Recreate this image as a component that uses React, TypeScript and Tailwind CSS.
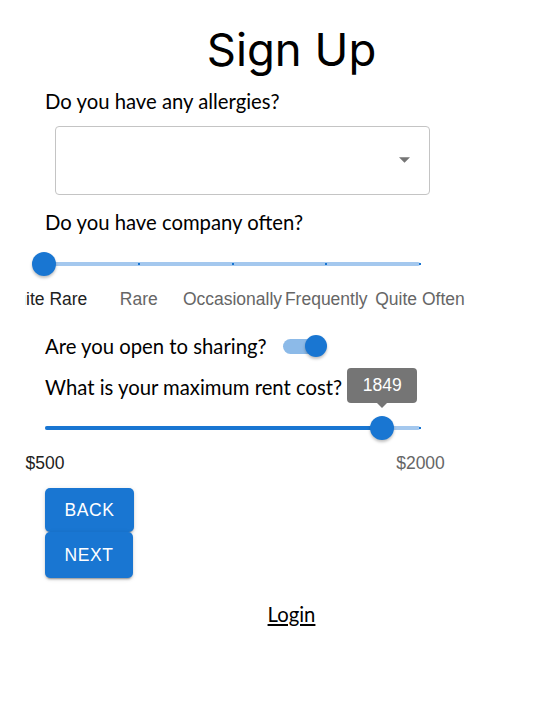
import React from "react";

const blue = "bg-[#1976d2]";

const companyMarks = [
    { label: "Quite Rare", pos: 0 },
    { label: "Rare", pos: 93.75 },
    { label: "Occasionally", pos: 187.5 },
    { label: "Frequently", pos: 281.25 },
    { label: "Quite Often", pos: 375 },
];

export default function App() {
    const rent = 1849;
    const rentPos = ((rent - 500) / 1500) * 375;

    return (
        <div className="min-h-screen w-full bg-white text-black font-['Lato','Noto_Sans',sans-serif]">
            {/* Title */}
            <div className="pl-[48px] pt-[22px] text-center">
                <h1 className="text-[45.5px] leading-[56px] font-normal font-['Inter',sans-serif]">Sign Up</h1>
            </div>

            <div className="pl-[25px] flex flex-col">
                {/* Allergies */}
                <p className="ml-[20px] mt-[11px] text-[20.3px] leading-[24px]">Do you have any allergies?</p>
                <div className="ml-[30px] mt-[13px] w-[375px] h-[69px] rounded-[4px] border border-[#c4c4c4] flex items-center justify-end pr-[19px]">
                    <svg width="11" height="6" viewBox="0 0 10 5" className="mb-[1px]">
                        <path d="M0 0l5 5 5-5z" fill="#757575" />
                    </svg>
                </div>

                {/* Company slider */}
                <p className="ml-[20px] mt-[15px] text-[20.3px] leading-[24px]">Do you have company often?</p>
                <div className="relative ml-[20px] mt-[10px] w-[375px] h-[40px] flex items-center">
                    <div className="w-full h-[4px] rounded-full bg-[#a4c8ee]" />
                    {companyMarks.map((m) => (
                        <span
                            key={m.label}
                            className={`absolute top-[19px] w-[2px] h-[2px] ${blue}`}
                            style={{ left: m.pos - 1 }}
                        />
                    ))}
                    <span className={`absolute top-[8px] left-[-13px] w-[24px] h-[24px] rounded-full ${blue} shadow-[0_2px_3px_rgba(0,0,0,0.25)]`} />
                </div>
                <div className="relative mt-[5px] h-[20px] overflow-hidden font-['Liberation_Sans',Arial,sans-serif] text-[17.5px] leading-[20px]">
                    {companyMarks.map((m, i) => (
                        <span
                            key={m.label}
                            className={`absolute top-0 -translate-x-1/2 whitespace-nowrap ${i === 0 ? "text-[#212121]" : "text-[#666666]"}`}
                            style={{ left: 20 + m.pos }}
                        >
                            {m.label}
                        </span>
                    ))}
                </div>

                {/* Sharing switch */}
                <div className="ml-[20px] mt-[24px] h-[26px] flex items-center">
                    <span className="w-[238px] text-[20.3px] leading-[24px]">Are you open to sharing?</span>
                    <div className="relative w-[37px] h-[15px] rounded-full bg-[#8cbae8]">
                        <span className={`absolute top-[-3.5px] left-[22px] w-[22px] h-[22px] rounded-full ${blue} shadow-[0_2px_3px_rgba(0,0,0,0.25)]`} />
                    </div>
                </div>

                {/* Rent slider */}
                <p className="ml-[20px] mt-[16px] text-[20.3px] leading-[24px]">What is your maximum rent cost?</p>
                <div className="relative ml-[20px] mt-[9px] w-[375px] h-[40px] flex items-center">
                    <div className="w-full h-[4px] rounded-full bg-[#a4c8ee]" />
                    <div className={`absolute left-0 top-[18px] h-[4px] rounded-full ${blue}`} style={{ width: rentPos }} />
                    <span className={`absolute top-[19px] left-[374px] w-[2px] h-[2px] ${blue}`} />
                    <span
                        className={`absolute top-[8px] w-[24px] h-[24px] rounded-full ${blue} shadow-[0_2px_3px_rgba(0,0,0,0.25)]`}
                        style={{ left: rentPos - 12 }}
                    />
                    {/* value label */}
                    <div
                        className="absolute top-[-40px] w-[70px] h-[35px] rounded-[4px] bg-[#757575] flex items-center justify-center text-white font-['Liberation_Sans',Arial,sans-serif] text-[17.5px]"
                        style={{ left: rentPos - 35 }}
                    >
                        {rent}
                        <span className="absolute bottom-[-5px] left-1/2 -translate-x-1/2 w-0 h-0 border-l-[6px] border-r-[6px] border-t-[6px] border-l-transparent border-r-transparent border-t-[#757575]" />
                    </div>
                </div>
                <div className="relative mt-[5px] h-[20px] font-['Liberation_Sans',Arial,sans-serif] text-[17.5px] leading-[20px]">
                    <span className="absolute top-0 left-[20px] -translate-x-1/2 text-[#212121]">$500</span>
                    <span className="absolute top-0 left-[395.5px] -translate-x-1/2 text-[#666666]">$2000</span>
                </div>

                {/* Buttons */}
                <div className="ml-[20px] mt-[15px] flex flex-col items-start font-['Liberation_Sans',Arial,sans-serif]">
                    <button className={`w-[89px] h-[44px] rounded-[5px] ${blue} text-white text-[17.5px] font-medium tracking-[0.03em] shadow-[0_3px_1px_-2px_rgba(0,0,0,0.2),0_2px_2px_0_rgba(0,0,0,0.14),0_1px_5px_0_rgba(0,0,0,0.12)]`}>
                        BACK
                    </button>
                    <button className={`w-[88px] h-[46px] rounded-[5px] ${blue} text-white text-[17.5px] font-medium tracking-[0.03em] shadow-[0_3px_1px_-2px_rgba(0,0,0,0.2),0_2px_2px_0_rgba(0,0,0,0.14),0_1px_5px_0_rgba(0,0,0,0.12)]`}>
                        NEXT
                    </button>
                </div>
            </div>

            {/* Login */}
            <div className="pl-[48px] mt-[24px] text-center">
                <a href="#" className="text-[20.3px] leading-[24px] underline text-black">Login</a>
            </div>
        </div>
    );
}
